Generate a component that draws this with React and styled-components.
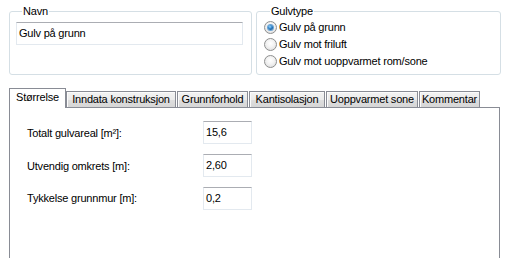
import React from "react";
import styled, { createGlobalStyle } from "styled-components";

const GlobalStyle = createGlobalStyle`
  html, body {
    margin: 0;
    padding: 0;
    background: #ffffff;
    overflow: hidden;
  }
  body {
    font-family: "Liberation Sans", Arial, sans-serif;
    font-size: 11px;
    letter-spacing: -0.2px;
    color: #000;
  }
`;

const Form = styled.div`
  width: 512px;
  height: 258px;
  overflow: hidden;
  padding: 5px 0 0 9px;
  box-sizing: border-box;
`;

const TopRow = styled.div`
  display: flex;
  gap: 4px;
  align-items: stretch;
`;

const Group = styled.fieldset`
  margin: 0;
  width: ${(p) => p.$w}px;
  box-sizing: border-box;
  border: 1px solid #d5dfe5;
  border-radius: 3px;
  padding: ${(p) => p.$pad};
  min-width: 0;
`;

const Legend = styled.legend`
  padding: 0 1px;
  margin-left: 6px;
  line-height: 13px;
  font-size: 11px;
`;

const TextBox = styled.div`
  box-sizing: border-box;
  width: ${(p) => p.$w}px;
  height: 23px;
  border: 1px solid #e3e9ef;
  border-top-color: #abadb3;
  background: #fff;
  padding: 0 2px;
  display: flex;
  align-items: center;
  line-height: 13px;
  white-space: nowrap;
`;

const RadioRow = styled.label`
  display: flex;
  align-items: center;
  height: 17px;
  gap: 2px;
  line-height: 13px;
`;

const RadioDot = styled.span`
  width: 13px;
  height: 13px;
  box-sizing: border-box;
  border-radius: 50%;
  border: 1px solid #8e8f8f;
  background: radial-gradient(circle at 50% 40%, #ffffff 0%, #f4f4f4 40%, #d8d8d8 100%);
  display: flex;
  align-items: center;
  justify-content: center;
  flex: none;

  &::after {
    content: "";
    display: ${(p) => (p.$on ? "block" : "none")};
    width: 5px;
    height: 5px;
    border-radius: 50%;
    background: radial-gradient(circle at 40% 35%, #9ad7ff 0%, #2a7fc6 45%, #0d3f7a 100%);
    box-shadow: 0 0 0 1px #6aa3d4;
  }
`;

const Tabs = styled.div`
  margin-top: 13px;
  width: 491px;
`;

const TabStrip = styled.div`
  display: flex;
  align-items: flex-end;
`;

const Tab = styled.div`
  box-sizing: border-box;
  width: ${(p) => p.$w}px;
  height: ${(p) => (p.$active ? 20 : 16)}px;
  margin-bottom: ${(p) => (p.$active ? -1 : 0)}px;
  margin-right: ${(p) => (p.$active ? 0 : 1)}px;
  border: 1px solid #898c95;
  border-bottom: none;
  background: ${(p) =>
    p.$active ? "#ffffff" : "linear-gradient(#f3f3f3, #ebebeb 50%, #dedede 51%, #d6d6d6)"};
  box-shadow: ${(p) => (p.$active ? "none" : "inset 1px 1px 0 #fbfbfb")};
  position: relative;
  z-index: ${(p) => (p.$active ? 1 : 0)};
  display: flex;
  align-items: center;
  justify-content: center;
  padding-bottom: ${(p) => (p.$active ? 3 : 0)}px;
  line-height: 13px;
  white-space: nowrap;
`;

const Panel = styled.div`
  box-sizing: border-box;
  height: 200px;
  border: 1px solid #898c95;
  border-bottom: none;
  background: #fff;
  padding: 13px 0 0 17px;
  display: grid;
  grid-template-columns: 176px 49px;
  grid-auto-rows: 23px;
  row-gap: 10px;
  align-content: start;
`;

const FieldLabel = styled.div`
  display: flex;
  align-items: center;
  line-height: 13px;
  padding-top: ${(p) => p.$dy || 0}px;
  white-space: nowrap;
`;

const tabs = [
  { label: "Størrelse", w: 57, active: true },
  { label: "Inndata konstruksjon", w: 110 },
  { label: "Grunnforhold", w: 71 },
  { label: "Kantisolasjon", w: 76 },
  { label: "Uoppvarmet sone", w: 92 },
  { label: "Kommentar", w: 61 },
];

const fields = [
  { label: "Totalt gulvareal [m²]:", value: "15,6", dy: 2 },
  { label: "Utvendig omkrets [m]:", value: "2,60", dy: 1 },
  { label: "Tykkelse grunnmur [m]:", value: "0,2", dy: -2 },
];

const App = () => {
  return (
    <Form>
      <GlobalStyle />
      <TopRow>
        <Group $w={243} $pad="4px 0 0 6px">
          <Legend>Navn</Legend>
          <TextBox $w={227}>Gulv på grunn</TextBox>
        </Group>
        <Group $w={245} $pad="1px 0 4px 7px">
          <Legend>Gulvtype</Legend>
          <RadioRow>
            <RadioDot $on />
            Gulv på grunn
          </RadioRow>
          <RadioRow>
            <RadioDot />
            Gulv mot friluft
          </RadioRow>
          <RadioRow>
            <RadioDot />
            Gulv mot uoppvarmet rom/sone
          </RadioRow>
        </Group>
      </TopRow>
      <Tabs>
        <TabStrip>
          {tabs.map((t) => (
            <Tab key={t.label} $w={t.w} $active={t.active}>
              {t.label}
            </Tab>
          ))}
        </TabStrip>
        <Panel>
          {fields.map((f) => (
            <React.Fragment key={f.label}>
              <FieldLabel $dy={f.dy}>{f.label}</FieldLabel>
              <TextBox $w={49}>{f.value}</TextBox>
            </React.Fragment>
          ))}
        </Panel>
      </Tabs>
    </Form>
  );
};

export default App;
